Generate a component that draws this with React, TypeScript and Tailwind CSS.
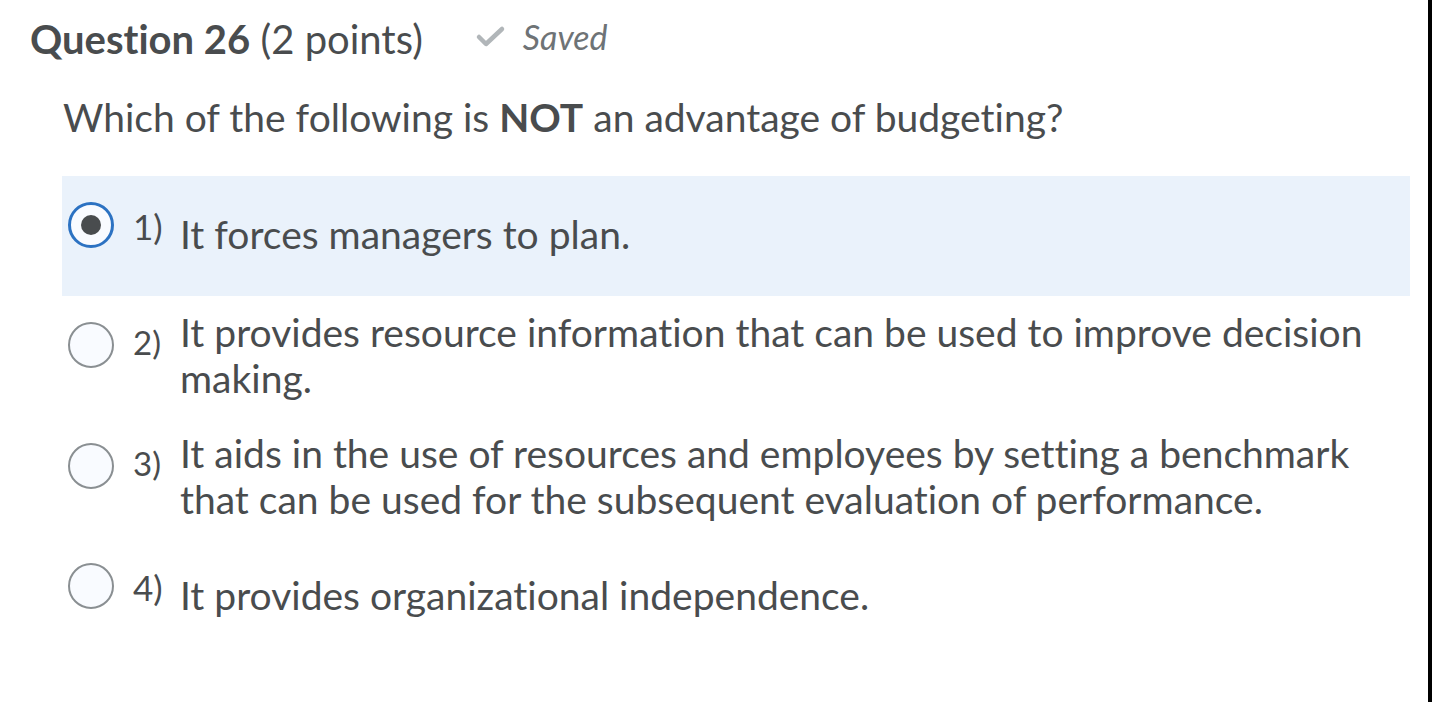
import React from 'react';

type Opt = { n: string; text: string; selected?: boolean; multi?: boolean };

const options: Opt[] = [
  { n: '1)', text: 'It forces managers to plan.', selected: true },
  { n: '2)', text: 'It provides resource information that can be used to improve decision making.', multi: true },
  { n: '3)', text: 'It aids in the use of resources and employees by setting a benchmark that can be used for the subsequent evaluation of performance.', multi: true },
  { n: '4)', text: 'It provides organizational independence.' },
];

function Radio({ selected }: { selected?: boolean }) {
  if (selected) {
    return (
      <div className="w-[46px] h-[46px] shrink-0 rounded-full border-[3px] border-[#2c72c2] bg-[#f9fbff] flex items-center justify-center">
        <div className="w-[20px] h-[20px] rounded-full bg-[#494c4e]" />
      </div>
    );
  }
  return <div className="w-[46px] h-[46px] shrink-0 rounded-full border-2 border-[#8a8f92] bg-[#f9fbff]" />;
}

function Option({ o }: { o: Opt }) {
  const row = o.selected ? 'bg-[#eaf2fb] h-[120px] pt-[26px]' : '';
  return (
    <div className={`flex items-start pl-[6px] pr-[10px] ${row}`}>
      <div className={o.multi ? 'mt-[13px]' : ''}>
        <Radio selected={o.selected} />
      </div>
      <span
        className={
          o.multi
            ? 'ml-[19px] w-[47px] shrink-0 text-[33px] leading-[36px] mt-[15px]'
            : 'ml-[19px] w-[47px] shrink-0 text-[35px] leading-[40px] mt-[4px]'
        }
      >
        {o.n}
      </span>
      <div className={`text-[39px] leading-[46px] ${o.multi ? '' : 'mt-[9px]'}`}>{o.text}</div>
    </div>
  );
}

export default function App() {
  return (
    <div
      className="w-[1432px] h-[702px] flex bg-white text-[#494c4e] overflow-hidden [font-variant-ligatures:none]"
      style={{ fontFamily: 'Lato, "Noto Sans", sans-serif' }}
    >
      <div className="flex-1 flex flex-col">
        <div className="flex items-center pl-[30px] mt-[15px] h-[48px]">
          <h2 className="text-[40px] leading-[48px]">
            <span className="font-bold">Question 26</span> (2 points)
          </h2>
          <svg className="ml-[52px] mt-[-4px]" width="31" height="26" viewBox="0 0 31 26" fill="none">
            <path d="M4 13 L11 20 L27 5" stroke="#b1b6b9" strokeWidth="4.5" strokeLinecap="round" strokeLinejoin="round" />
          </svg>
          <span className="ml-[17px] italic text-[34px] leading-[48px] text-[#6e7376] mt-[-4px]">Saved</span>
        </div>
        <p className="pl-[63px] mt-[31px] text-[39px] leading-[47px]">
          Which of the following is <span className="font-bold">NOT</span> an advantage of budgeting?
        </p>
        <div className="ml-[62px] w-[1348px] mt-[35px] flex flex-col">
          <Option o={options[0]} />
          <div className="mt-[13px]">
            <Option o={options[1]} />
          </div>
          <div className="mt-[29px]">
            <Option o={options[2]} />
          </div>
          <div className="mt-[41px]">
            <Option o={options[3]} />
          </div>
        </div>
      </div>
      <div className="w-[4px] bg-black" />
    </div>
  );
}
